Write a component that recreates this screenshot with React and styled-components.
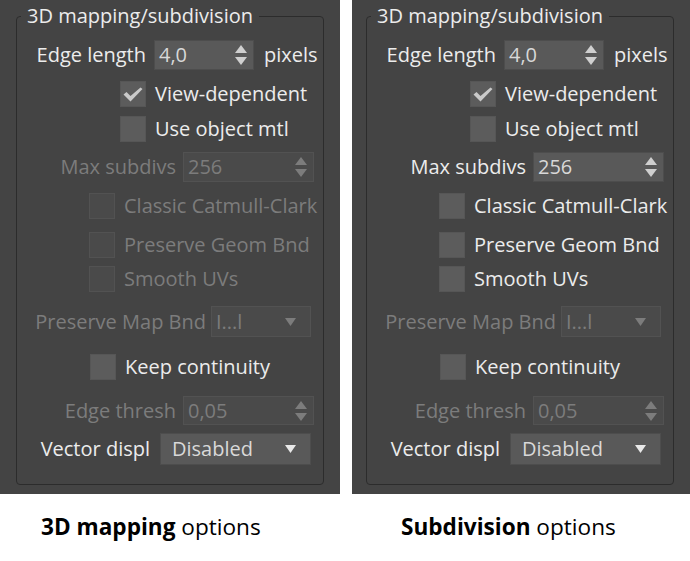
import React from "react";
import styled, { createGlobalStyle } from "styled-components";

const Global = createGlobalStyle`
  html, body { margin: 0; padding: 0; background: #ffffff; }
  body { font-family: "Open Sans", "Noto Sans", sans-serif; }
`;

const Page = styled.div`
  display: flex;
  gap: 12px;
  width: 690px;
`;

const Column = styled.div`
  display: flex;
  flex-direction: column;
  width: ${(p) => p.$w}px;
`;

const Panel = styled.div`
  background: #444444;
  height: 494px;
  box-sizing: border-box;
  padding-top: 5px;
  padding-left: ${(p) => 16 - p.$crop}px;
  overflow: hidden;
`;

const Frame = styled.fieldset`
  margin: 0;
  width: 308px;
  min-width: 0;
  box-sizing: border-box;
  border: 1px solid #2c2c2c;
  border-radius: 4px;
  padding: 0 5px 19px 0;
  display: flex;
  flex-direction: column;
`;

const Legend = styled.legend`
  margin-left: 4px;
  padding: 0 6px;
  font-size: 20px;
  line-height: 22px;
  color: #ececec;
`;

const Row = styled.div`
  display: flex;
  align-items: center;
  margin-top: ${(p) => p.$mt}px;
  height: ${(p) => p.$h}px;
  padding-left: ${(p) => p.$indent || 0}px;
  overflow: hidden;
  white-space: nowrap;
`;

const Label = styled.div`
  display: flex;
  justify-content: flex-end;
  flex: none;
  width: ${(p) => p.$w}px;
  margin-right: ${(p) => p.$gap}px;
  font-size: 20px;
  line-height: 22px;
  color: ${(p) => (p.$off ? "#7c7c7c" : "#ececec")};
`;

const Text = styled.span`
  font-size: 20px;
  line-height: 22px;
  color: ${(p) => (p.$off ? "#7c7c7c" : "#ececec")};
  margin-left: ${(p) => p.$ml || 0}px;
`;

const Field = styled.div`
  flex: none;
  display: flex;
  align-items: center;
  justify-content: space-between;
  box-sizing: border-box;
  width: ${(p) => p.$w}px;
  height: 100%;
  padding: 0 ${(p) => p.$pr}px 0 ${(p) => p.$pl}px;
  background: ${(p) => (p.$off ? "#4a4a4a" : "#595959")};
  border: 1px solid ${(p) => (p.$off ? "#525252" : "#4d4d4d")};
  font-size: 20px;
  line-height: 22px;
  color: ${(p) => (p.$off ? "#7c7c7c" : "#d8d8d8")};
`;

const Box = styled.div`
  flex: none;
  width: 26px;
  height: 26px;
  box-sizing: border-box;
  display: flex;
  align-items: center;
  justify-content: center;
  background: ${(p) => (p.$off ? "#4a4a4a" : "#5c5c5c")};
  border: 1px solid ${(p) => (p.$off ? "#525252" : "#565656")};
`;

const Caption = styled.div`
  margin-top: 18px;
  padding-left: ${(p) => p.$pad}px;
  font-size: 22.6px;
  line-height: 30px;
  color: #000000;
  white-space: nowrap;
  b { font-weight: 700; }
`;

const SpinArrows = ({ color }) => (
  <svg width="12" height="20" viewBox="0 0 12 20">
    <polygon points="6,0 12,8 0,8" fill={color} />
    <polygon points="0,12 12,12 6,20" fill={color} />
  </svg>
);

const DropArrow = ({ color }) => (
  <svg width="11" height="8" viewBox="0 0 11 8">
    <polygon points="0,0 11,0 5.5,8" fill={color} />
  </svg>
);

const Check = () => (
  <svg width="20" height="15" viewBox="0 0 20 15">
    <path d="M0.5 7.5 L3.5 5 L7.5 9 L17.5 0.5 L19.5 2 L7.5 14.5 Z" fill="#c9c9c9" />
  </svg>
);

function FieldRow({ r }) {
  const arrowColor = r.off ? "#7c7c7c" : r.kind === "drop" ? "#e8e8e8" : "#cfcfcf";
  return (
    <Row $mt={r.mt} $h={r.h}>
      <Label $w={r.lw} $gap={r.gap} $off={r.off}>
        <span>{r.label}</span>
      </Label>
      <Field $w={r.w} $off={r.off} $pl={r.pl} $pr={r.kind === "drop" ? 14 : 6}>
        <span>{r.value}</span>
        {r.kind === "drop" ? <DropArrow color={arrowColor} /> : <SpinArrows color={arrowColor} />}
      </Field>
      {r.suffix && <Text $ml={10}>{r.suffix}</Text>}
    </Row>
  );
}

function CheckRow({ r }) {
  return (
    <Row $mt={r.mt} $h={26} $indent={r.indent}>
      <Box $off={r.off}>{r.checked && <Check />}</Box>
      <Text $ml={9} $off={r.off}>{r.label}</Text>
    </Row>
  );
}

const rowsFor = (subdiv) => [
  { type: "field", kind: "spin", label: "Edge length", lw: 129, gap: 8, w: 100, pl: 4, value: "4,0", suffix: "pixels", mt: 13, h: 30 },
  { type: "check", label: "View-dependent", indent: 103, checked: true, mt: 11 },
  { type: "check", label: "Use object mtl", indent: 103, mt: 9 },
  { type: "field", kind: "spin", label: "Max subdivs", lw: 159, gap: 7, w: 131, pl: 4, value: "256", off: !subdiv, mt: 10, h: 30 },
  { type: "check", label: "Classic Catmull-Clark", indent: 72, off: !subdiv, mt: 11 },
  { type: "check", label: "Preserve Geom Bnd", indent: 72, off: !subdiv, mt: 13 },
  { type: "check", label: "Smooth UVs", indent: 72, off: !subdiv, mt: 8 },
  { type: "field", kind: "drop", label: "Preserve Map Bnd", lw: 189, gap: 5, w: 100, pl: 4, value: "I...l", off: true, mt: 14, h: 31 },
  { type: "check", label: "Keep continuity", indent: 73, mt: 17 },
  { type: "field", kind: "spin", label: "Edge thresh", lw: 159, gap: 7, w: 131, pl: 4, value: "0,05", off: true, mt: 16, h: 29 },
  { type: "field", kind: "drop", label: "Vector displ", lw: 133, gap: 10, w: 151, pl: 11, value: "Disabled", mt: 8, h: 32 },
];

function OptionsPanel({ subdiv, crop }) {
  return (
    <Panel $crop={crop}>
      <Frame>
        <Legend>3D mapping/subdivision</Legend>
        {rowsFor(subdiv).map((r) =>
          r.type === "field" ? <FieldRow key={r.label} r={r} /> : <CheckRow key={r.label} r={r} />
        )}
      </Frame>
    </Panel>
  );
}

export default function App() {
  return (
    <>
      <Global />
      <Page>
        <Column $w={340}>
          <OptionsPanel subdiv={false} crop={0} />
          <Caption $pad={41}>
            <b>3D mapping</b> options
          </Caption>
        </Column>
        <Column $w={338}>
          <OptionsPanel subdiv={true} crop={2} />
          <Caption $pad={49}>
            <b>Subdivision</b> options
          </Caption>
        </Column>
      </Page>
    </>
  );
}
